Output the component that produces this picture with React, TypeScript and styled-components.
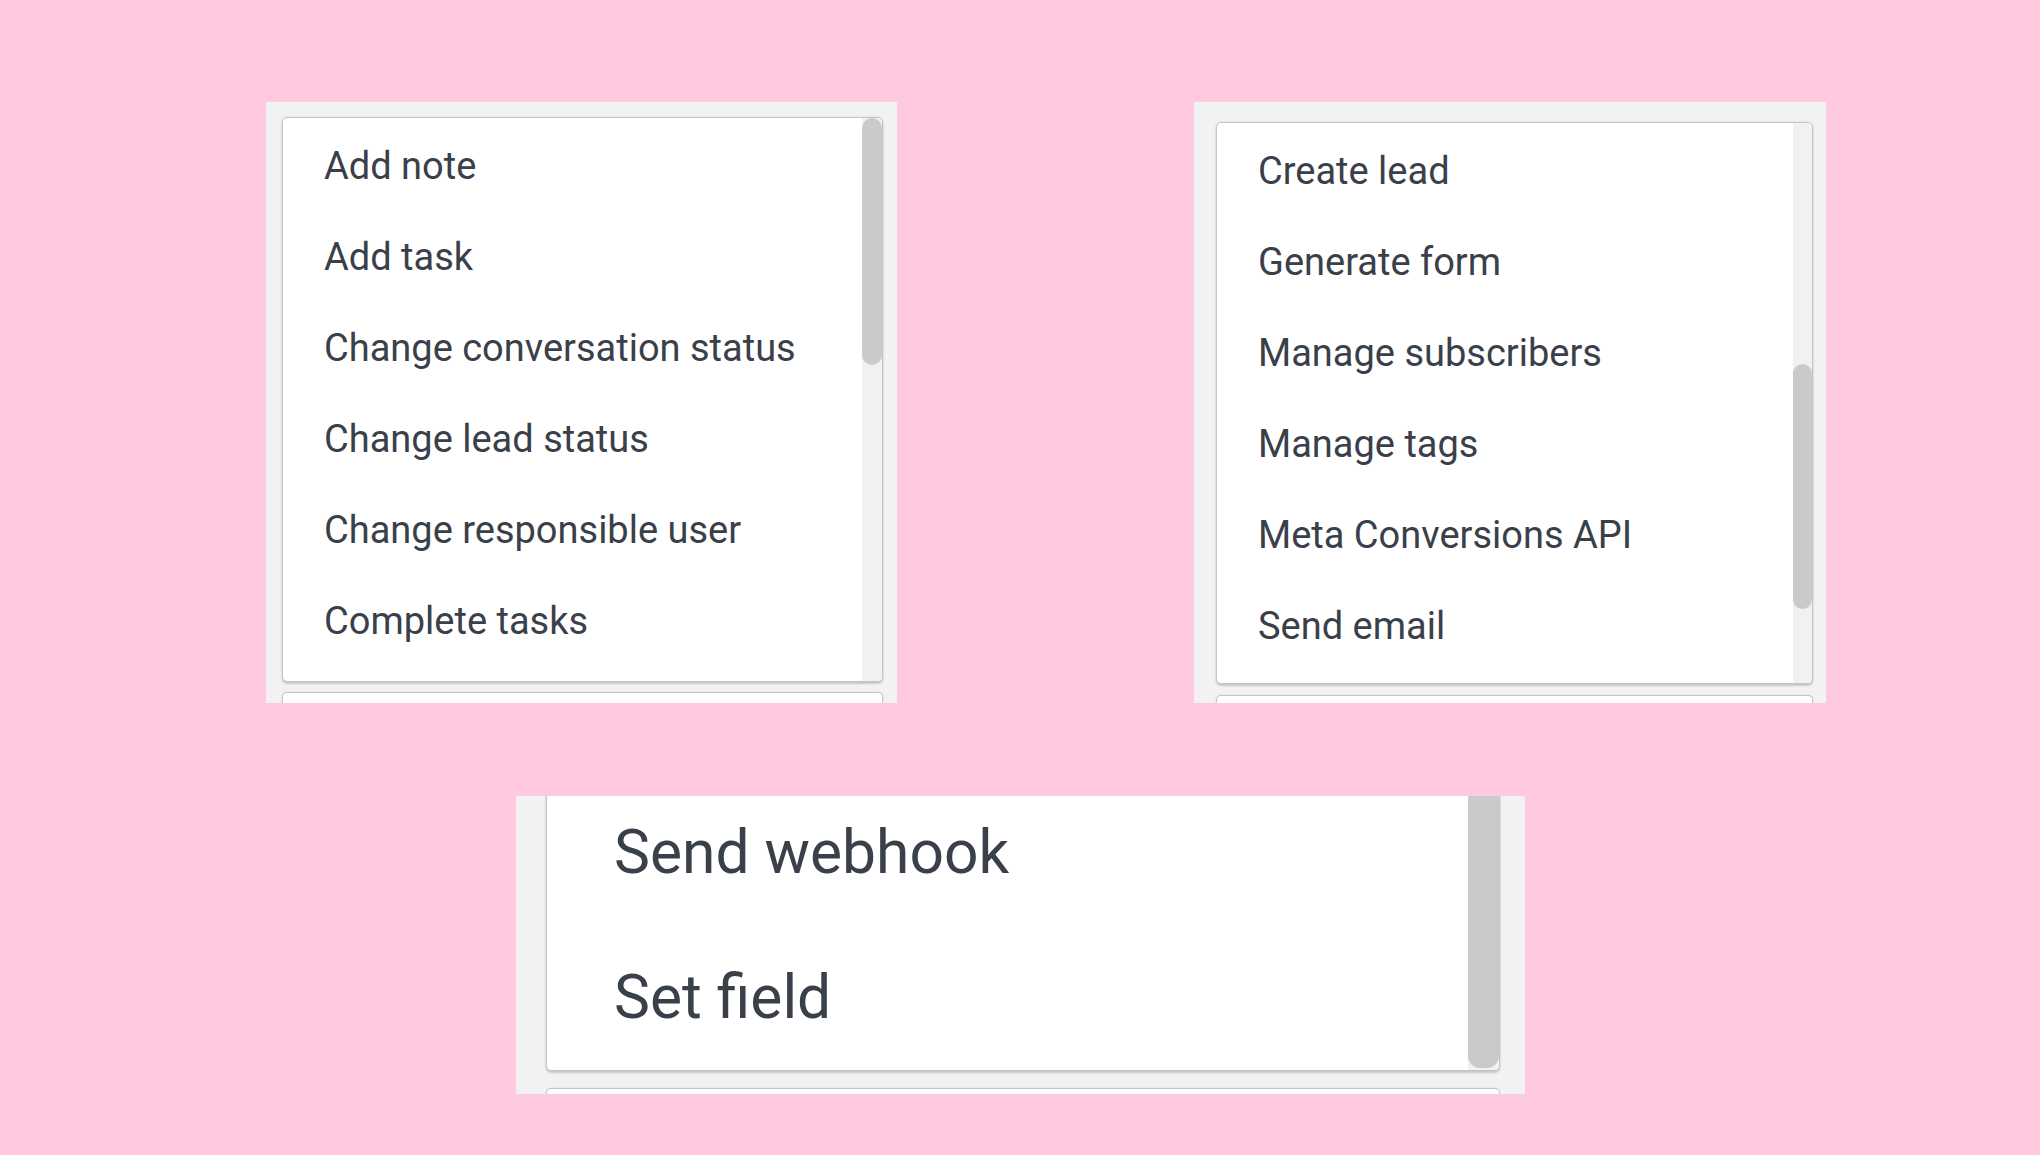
import styled, { createGlobalStyle } from "styled-components";

const GlobalStyle = createGlobalStyle`
  html, body {
    margin: 0;
    padding: 0;
    background: #ffc9df;
  }
  body {
    font-family: Roboto, "Liberation Sans", sans-serif;
  }
`;

interface DropdownProps {
  items: string[];
  width: number;
  height: number;
  pad: string;
  fromBottom?: boolean;
  cardHeight: number;
  gap: number;
  peek: number;
  fontSize: number;
  rowHeight: number;
  textIndent: number;
  listOffset: number;
  trackWidth: number;
  thumbTop: number;
  thumbHeight: number;
}

function Dropdown(props: DropdownProps) {
  const {
    items,
    width,
    height,
    pad,
    fromBottom,
    cardHeight,
    gap,
    peek,
    fontSize,
    rowHeight,
    textIndent,
    listOffset,
    trackWidth,
    thumbTop,
    thumbHeight,
  } = props;

  return (
    <StPanel $w={width} $h={height} $pad={pad} $bottom={!!fromBottom}>
      <StCard $h={cardHeight}>
        <StList $offset={listOffset}>
          {items.map((item) => (
            <StOption
              key={item}
              $size={fontSize}
              $row={rowHeight}
              $indent={textIndent}
            >
              {item}
            </StOption>
          ))}
        </StList>
        <StTrack $w={trackWidth}>
          <StThumb $top={thumbTop} $h={thumbHeight} />
        </StTrack>
      </StCard>
      <StPeek $gap={gap} $h={peek} />
    </StPanel>
  );
}

export default function App() {
  return (
    <>
      <GlobalStyle />
      <StPage>
        <StTopRow>
          <Dropdown
            items={[
              "Add note",
              "Add task",
              "Change conversation status",
              "Change lead status",
              "Change responsible user",
              "Complete tasks",
            ]}
            width={631}
            height={601}
            pad="15px 14px 0 16px"
            cardHeight={565}
            gap={10}
            peek={11}
            fontSize={38}
            rowHeight={91}
            textIndent={41}
            listOffset={3}
            trackWidth={20}
            thumbTop={0}
            thumbHeight={247}
          />
          <Dropdown
            items={[
              "Create lead",
              "Generate form",
              "Manage subscribers",
              "Manage tags",
              "Meta Conversions API",
              "Send email",
            ]}
            width={632}
            height={601}
            pad="20px 13px 0 22px"
            cardHeight={562}
            gap={11}
            peek={8}
            fontSize={38}
            rowHeight={91}
            textIndent={41}
            listOffset={3}
            trackWidth={19}
            thumbTop={241}
            thumbHeight={245}
          />
        </StTopRow>
        <StBottomRow>
          <Dropdown
            items={["Send webhook", "Set field"]}
            width={1009}
            height={298}
            pad="0 25px 0 30px"
            fromBottom
            cardHeight={292}
            gap={17}
            peek={6}
            fontSize={60.5}
            rowHeight={145}
            textIndent={67}
            listOffset={0}
            trackWidth={31}
            thumbTop={8}
            thumbHeight={280}
          />
        </StBottomRow>
      </StPage>
    </>
  );
}

const StPage = styled.main`
  display: flex;
  flex-direction: column;
  padding-top: 102px;
  width: 2040px;
  height: 1155px;
  box-sizing: border-box;
`;

const StTopRow = styled.section`
  display: flex;
  gap: 297px;
  padding-left: 266px;
`;

const StBottomRow = styled.section`
  display: flex;
  margin-top: 93px;
  padding-left: 516px;
`;

const StPanel = styled.div<{ $w: number; $h: number; $pad: string; $bottom: boolean }>`
  display: flex;
  flex-direction: column;
  justify-content: ${({ $bottom }) => ($bottom ? "flex-end" : "flex-start")};
  width: ${({ $w }) => $w}px;
  height: ${({ $h }) => $h}px;
  padding: ${({ $pad }) => $pad};
  box-sizing: border-box;
  background-color: #f2f2f2;
  overflow: hidden;
`;

const StCard = styled.div<{ $h: number }>`
  display: flex;
  flex-shrink: 0;
  height: ${({ $h }) => $h}px;
  background-color: #ffffff;
  border: 1px solid #c4c4c4;
  border-radius: 5px;
  box-shadow: 0 0 3px rgba(0, 0, 0, 0.08), 0 2px 2px rgba(0, 0, 0, 0.16);
  box-sizing: border-box;
  overflow: hidden;
`;

const StList = styled.ul<{ $offset: number }>`
  flex: 1;
  margin: 0;
  padding: ${({ $offset }) => $offset}px 0 0;
  list-style: none;
  overflow: hidden;
`;

const StOption = styled.li<{ $size: number; $row: number; $indent: number }>`
  height: ${({ $row }) => $row}px;
  line-height: ${({ $row }) => $row}px;
  padding-left: ${({ $indent }) => $indent}px;
  font-size: ${({ $size }) => $size}px;
  color: #3a404a;
  white-space: nowrap;
`;

const StTrack = styled.div<{ $w: number }>`
  display: flex;
  flex-direction: column;
  flex-shrink: 0;
  width: ${({ $w }) => $w}px;
  background-color: #f1f1f1;
`;

const StThumb = styled.div<{ $top: number; $h: number }>`
  margin-top: ${({ $top }) => $top}px;
  height: ${({ $h }) => $h}px;
  background-color: #cacaca;
  border-radius: 12px;
`;

const StPeek = styled.div<{ $gap: number; $h: number }>`
  flex-shrink: 0;
  margin-top: ${({ $gap }) => $gap}px;
  height: ${({ $h }) => $h}px;
  background-color: #ffffff;
  border: 1px solid #c4c4c4;
  border-bottom: none;
  border-radius: 5px 5px 0 0;
  box-shadow: 0 0 3px rgba(0, 0, 0, 0.08);
  box-sizing: border-box;
`;
